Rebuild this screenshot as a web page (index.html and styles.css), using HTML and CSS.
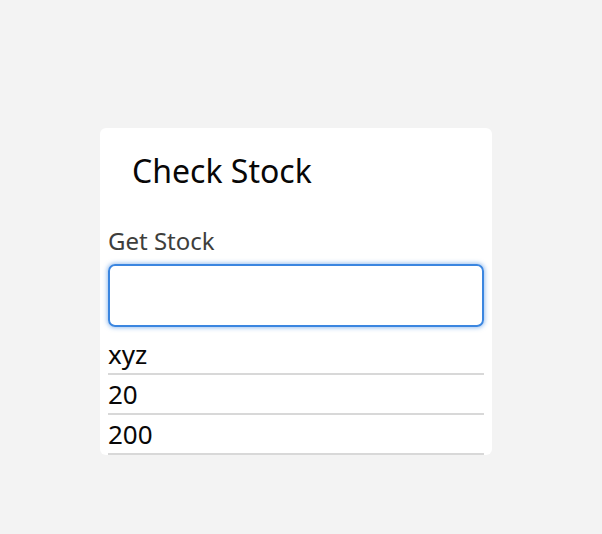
FILE: index.html
```html
<!DOCTYPE html>
<html>
<head>
<meta charset="utf-8">
<link rel="stylesheet" href="styles.css">
</head>
<body>
<div class="card">
  <h1 class="title">Check Stock</h1>
  <div class="body">
    <label class="label">Get Stock</label>
    <div class="input"></div>
    <ul class="list">
      <li>xyz</li>
      <li>20</li>
      <li>200</li>
    </ul>
  </div>
</div>
</body>
</html>
```
FILE: styles.css
```css
html, body {
  margin: 0;
  padding: 0;
  background: #f3f3f3;
  font-family: "Noto Sans", "Open Sans", sans-serif;
  color: #080707;
}
body {
  padding: 128px 110px 0 100px;
}
.card {
  width: 392px;
  height: 327px;
  background: #fff;
  border-radius: 6px;
  overflow: hidden;
  box-sizing: border-box;
}
.title {
  margin: 0;
  padding: 21px 0 0 32px;
  font-size: 32px;
  font-weight: 400;
  line-height: 44px;
}
.body {
  padding: 0 8px;
  margin-top: 33px;
}
.label {
  display: block;
  font-size: 24px;
  line-height: 30px;
  color: #3e3e3c;
}
.input {
  margin-top: 8px;
  height: 59px;
  border: 2px solid #3b86e0;
  border-radius: 7px;
  box-shadow: 0 0 4px 1px rgba(59,134,224,0.5);
}
.list {
  list-style: none;
  margin: 8px 0 0;
  padding: 0;
}
.list li {
  font-size: 26px;
  line-height: 38px;
  height: 38px;
  border-bottom: 2px solid #d8d8d8;
}
```
